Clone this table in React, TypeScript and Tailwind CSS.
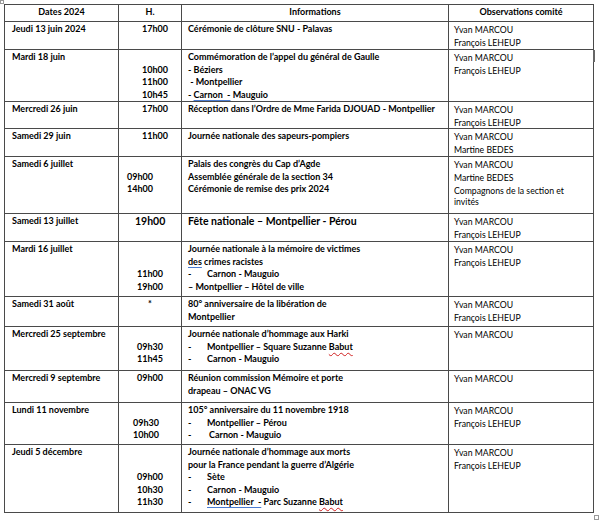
import type { ReactNode } from 'react'

type Row = {
  date: string
  hours: string[]
  hourPad: string
  info: ReactNode[]
  obs: ReactNode[]
  h: string
  big?: boolean
}

const blue = 'underline decoration-[#4a7bd0] underline-offset-2'
const wavy = 'underline decoration-wavy decoration-[#d02020] underline-offset-2'

const yf = ['Yvan MARCOU', 'François LEHEUP']

const Dash = ({ w = 'w-[19px]' }: { w?: string }) => <span className={`inline-block ${w}`}>-</span>

const rows: Row[] = [
  {
    date: 'Jeudi 13 juin 2024',
    hours: ['17h00'],
    hourPad: 'pl-[23px]',
    info: ['Cérémonie de clôture SNU - Palavas'],
    obs: yf,
    h: 'h-[28px]'
  },
  {
    date: 'Mardi 18 juin',
    hours: ['', '10h00', '11h00', '10h45'],
    hourPad: 'pl-[23px]',
    info: [
      'Commémoration de l’appel du général de Gaulle',
      '- Béziers',
      '\u00a0- Montpellier',
      <>- <span className={blue}>Carnon&nbsp; -</span> Mauguio</>
    ],
    obs: yf,
    h: 'h-[52px]'
  },
  {
    date: 'Mercredi 26 juin',
    hours: ['17h00'],
    hourPad: 'pl-[23px]',
    info: ['Réception dans l’Ordre de Mme Farida DJOUAD - Montpellier'],
    obs: yf,
    h: 'h-[27px]'
  },
  {
    date: 'Samedi 29 juin',
    hours: ['11h00'],
    hourPad: 'pl-[23px]',
    info: ['Journée nationale des sapeurs-pompiers'],
    obs: ['Yvan MARCOU', 'Martine BEDES'],
    h: 'h-[28px]'
  },
  {
    date: 'Samedi 6 juillet',
    hours: ['', '09h00', '14h00'],
    hourPad: 'pl-[8px]',
    info: [
      'Palais des congrès du Cap d’Agde',
      'Assemblée générale de la section 34',
      'Cérémonie de remise des prix 2024'
    ],
    obs: [
      'Yvan MARCOU',
      'Martine BEDES',
      <span className="block leading-[11px] pt-[1px]">
        Compagnons de la section et
        <br />
        invités
      </span>
    ],
    h: 'h-[57px]'
  },
  {
    date: 'Samedi 13 juillet',
    hours: ['19h00'],
    hourPad: 'pl-[16px]',
    info: ['Fête nationale – Montpellier - Pérou'],
    obs: yf,
    h: 'h-[28px]',
    big: true
  },
  {
    date: 'Mardi 16 juillet',
    hours: ['', '', '11h00', '19h00'],
    hourPad: 'pl-[18px]',
    info: [
      'Journée nationale à la mémoire de victimes',
      <><span className={blue}>des</span> crimes racistes</>,
      <><Dash />Carnon - Mauguio</>,
      '– Montpellier – Hôtel de ville'
    ],
    obs: yf,
    h: 'h-[55px]'
  },
  {
    date: 'Samedi 31 août',
    hours: ['*'],
    hourPad: 'text-center',
    info: ['80° anniversaire de la libération de', 'Montpellier'],
    obs: yf,
    h: 'h-[30px]'
  },
  {
    date: 'Mercredi 25 septembre',
    hours: ['', '09h30', '11h45'],
    hourPad: 'pl-[18px]',
    info: [
      'Journée nationale d’hommage aux Harki',
      <><Dash />Montpellier – Square Suzanne <span className={wavy}>Babut</span></>,
      <><Dash />Carnon - Mauguio</>
    ],
    obs: ['Yvan MARCOU'],
    h: 'h-[44px]'
  },
  {
    date: 'Mercredi 9 septembre',
    hours: ['09h00'],
    hourPad: 'pl-[18px]',
    info: ['Réunion commission Mémoire et porte', 'drapeau – ONAC VG'],
    obs: ['Yvan MARCOU'],
    h: 'h-[32px]'
  },
  {
    date: 'Lundi 11 novembre',
    hours: ['', '09h30', '10h00'],
    hourPad: 'pl-[14px]',
    info: [
      '105° anniversaire du 11 novembre 1918',
      <><Dash />Montpellier – Pérou</>,
      <><Dash w="w-[21px]" />Carnon - Mauguio</>
    ],
    obs: yf,
    h: 'h-[42px]'
  },
  {
    date: 'Jeudi 5 décembre',
    hours: ['', '', '09h00', '10h30', '11h30'],
    hourPad: 'pl-[18px]',
    info: [
      'Journée nationale d’hommage aux morts',
      'pour la France pendant la guerre d’Algérie',
      <><Dash />Sète</>,
      <><Dash />Carnon - Mauguio</>,
      <><Dash /><span className={blue}>Montpellier&nbsp; -</span> Parc Suzanne <span className={wavy}>Babut</span></>
    ],
    obs: yf,
    h: 'h-[68px]'
  }
]

const cols = 'grid grid-cols-[114px_63px_267px_145px]'
const cell = 'border-r border-b border-[#4a4a4a] pt-px overflow-hidden'

function Lines({ items }: { items: ReactNode[] }) {
  return (
    <>
      {items.map((t, i) => (
        <div key={i} className="h-[12.5px] whitespace-pre">
          {t}
        </div>
      ))}
    </>
  )
}

export default function App() {
  return (
    <div
      className="relative w-[599px] h-[520px] bg-white text-black text-[9px] leading-[12.5px]"
      style={{ fontFamily: 'Lato, "Liberation Sans", sans-serif' }}
    >
      <div className="pl-[4px] pt-[4px]">
        <div className="w-[590px] border-l border-t border-[#4a4a4a]">
          <div className={`${cols} h-[17px] font-bold text-center`}>
            <div className={`${cell} pt-[2px]`}>Dates 2024</div>
            <div className={`${cell} pt-[2px]`}>H.</div>
            <div className={`${cell} pt-[2px]`}>Informations</div>
            <div className={`${cell} pt-[2px]`}>Observations comité</div>
          </div>
          {rows.map((r) => (
            <div key={r.date} className={`${cols} ${r.h}`}>
              <div className={`${cell} pl-[7px] font-bold`}>{r.date}</div>
              <div className={`${cell} ${r.hourPad} font-bold ${r.big ? 'text-[10.5px] pt-[2px]' : ''}`}>
                <Lines items={r.hours} />
              </div>
              <div className={`${cell} pl-[6px] font-bold ${r.big ? 'text-[10.5px] pt-[2px]' : ''}`}>
                <Lines items={r.info} />
              </div>
              <div className={`${cell} pl-[5px] pr-[4px] text-[8.7px]`}>
                {r.obs.map((o, i) => (
                  <div key={i} className="leading-[13px]">
                    {o}
                  </div>
                ))}
              </div>
            </div>
          ))}
        </div>
      </div>
      <div className="absolute left-0 top-0 w-[4px] h-[4px] border border-[#9a9a9a] bg-white" />
      <div className="absolute left-[593px] top-[50px] w-[2px] h-[12px] bg-[#666]" />
      <div className="absolute left-[594px] top-[515px] w-[5px] h-[5px] border border-[#9a9a9a] bg-white" />
    </div>
  )
}
